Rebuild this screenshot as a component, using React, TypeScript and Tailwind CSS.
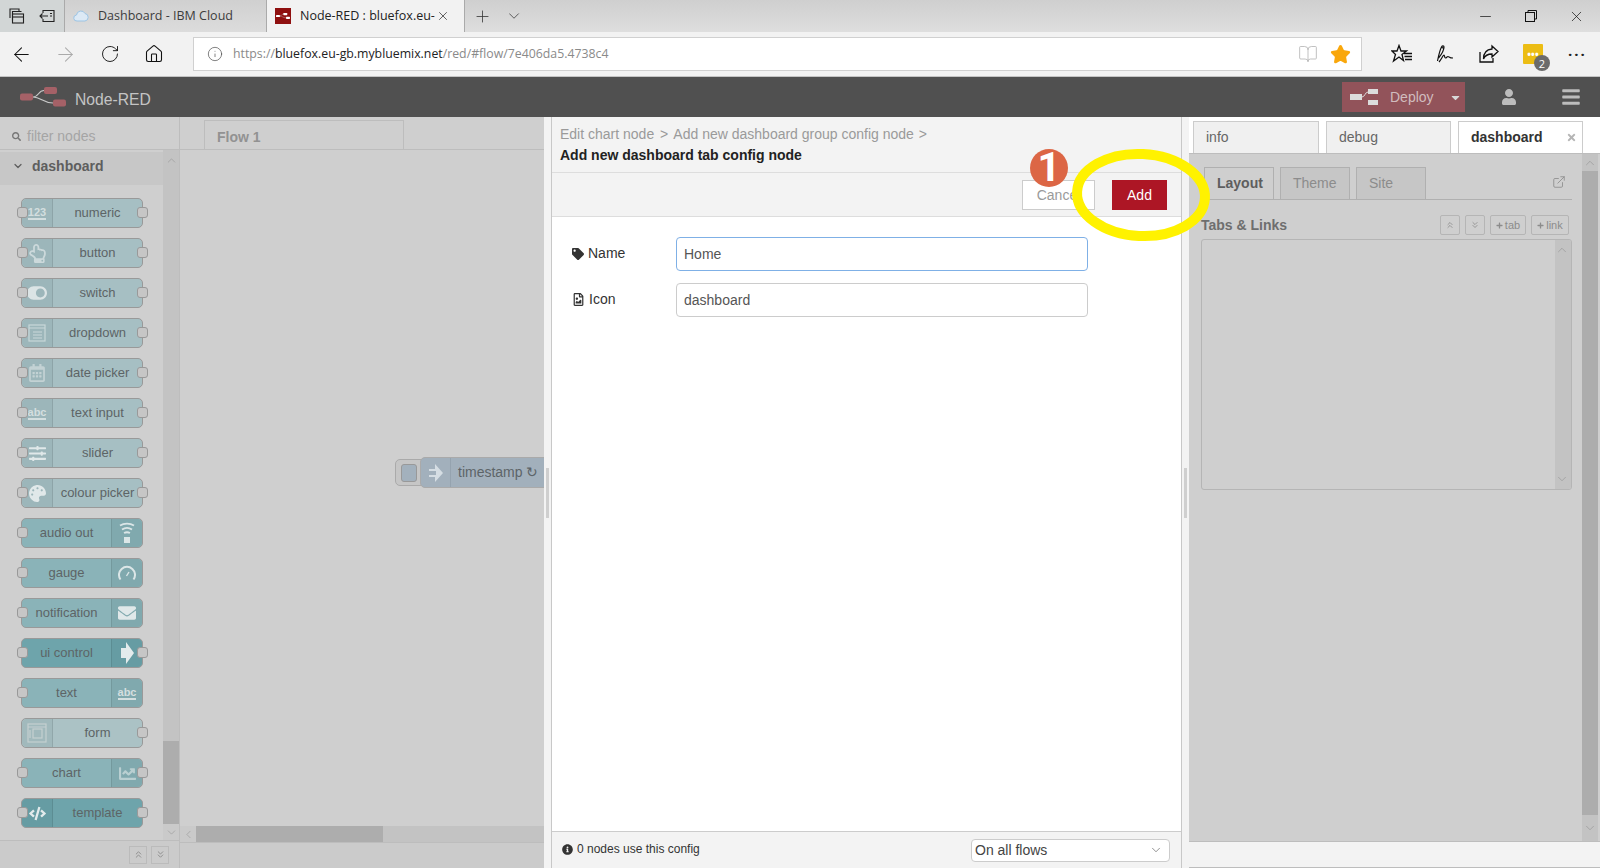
import { ArrowLeft, ArrowRight, BookOpen, ChevronDown, ChevronLeft, ChevronUp, ChevronsDown, ChevronsUp, ExternalLink, Home, Info, Minus, Plus, RotateCw, Star, X } from "lucide-react";
import { FaBars, FaCaretDown, FaCode, FaChartLine, FaEnvelope, FaRegFileImage, FaInfoCircle, FaPalette, FaPlus, FaRegCalendarAlt, FaRegHandPointUp, FaSearch, FaSlidersH, FaTag, FaTimes, FaToggleOn, FaUser } from "react-icons/fa";
import type { ReactNode } from "react";

interface PaletteNode {
  label: string;
  icon: ReactNode;
  side: "left" | "right";
  inPort: boolean;
  outPort: boolean;
  body: string;
  iconBg: string;
}

const Digits = ({ text }: { text: string }) => (
  <span className="border-b-2 border-[#d3dedf] text-[11px] font-bold leading-[12px] text-[#d3dedf]">{text}</span>
);

const WindowIcon = () => (
  <svg width="20" height="20" viewBox="0 0 20 20" fill="none" stroke="#c9d7d9" strokeWidth="1.2">
    <rect x="2" y="2" width="16" height="16" />
    <path d="M2 5h16M6 9h9M6 12h9M6 15h9" />
  </svg>
);

const FormIcon = () => (
  <svg width="20" height="20" viewBox="0 0 20 20" fill="none" stroke="#c5d0d1" strokeWidth="1.2">
    <rect x="1" y="1" width="18" height="18" />
    <rect x="6" y="6" width="9" height="9" />
    <path d="M1 4h18M3 7v8" />
  </svg>
);

const AudioIcon = () => (
  <svg width="16" height="22" viewBox="0 0 16 22" fill="none" stroke="#dbe6e7" strokeWidth="1.8">
    <path d="M1 3.5c4-2.5 10-2.5 14 0M3 7.5c3-2 7-2 10 0M5 11c2-1 4-1 6 0" />
    <rect x="5" y="15" width="6" height="6" fill="#dbe6e7" stroke="none" />
  </svg>
);

const GaugeIcon = () => (
  <svg width="18" height="16" viewBox="0 0 18 16" fill="none" stroke="#dbe6e7" strokeWidth="2">
    <path d="M2.5 14.5a8 8 0 1 1 13 0" />
    <path d="M8.5 11l2.5-4" strokeWidth="1.4" />
  </svg>
);

const ArrowNodeIcon = () => (
  <svg width="14" height="22" viewBox="0 0 14 22" fill="#e3ebec">
    <path d="M1 6h5V0l8 11-8 11v-6H1z" />
  </svg>
);

const nodes: PaletteNode[] = [
  { label: "numeric", icon: <Digits text="123" />, side: "left", inPort: true, outPort: true, body: "bg-[#a6bfc3]", iconBg: "bg-[#9cb6ba]" },
  { label: "button", icon: <FaRegHandPointUp className="text-[#ccd9db] text-[19px]" />, side: "left", inPort: true, outPort: true, body: "bg-[#a6bfc3]", iconBg: "bg-[#9cb6ba]" },
  { label: "switch", icon: <FaToggleOn className="text-[#dbe4e5] text-[20px]" />, side: "left", inPort: true, outPort: true, body: "bg-[#a6bfc3]", iconBg: "bg-[#9cb6ba]" },
  { label: "dropdown", icon: <WindowIcon />, side: "left", inPort: true, outPort: true, body: "bg-[#a6bfc3]", iconBg: "bg-[#9cb6ba]" },
  { label: "date picker", icon: <FaRegCalendarAlt className="text-[#c3d2d4] text-[18px]" />, side: "left", inPort: true, outPort: true, body: "bg-[#a6bfc3]", iconBg: "bg-[#9cb6ba]" },
  { label: "text input", icon: <Digits text="abc" />, side: "left", inPort: true, outPort: true, body: "bg-[#a6bfc3]", iconBg: "bg-[#9cb6ba]" },
  { label: "slider", icon: <FaSlidersH className="text-[#e0e8e9] text-[17px]" />, side: "left", inPort: true, outPort: true, body: "bg-[#a6bfc3]", iconBg: "bg-[#9cb6ba]" },
  { label: "colour picker", icon: <FaPalette className="text-[#e0e8e9] text-[17px]" />, side: "left", inPort: true, outPort: true, body: "bg-[#a6bfc3]", iconBg: "bg-[#9cb6ba]" },
  { label: "audio out", icon: <AudioIcon />, side: "right", inPort: true, outPort: false, body: "bg-[#8ab3b8]", iconBg: "bg-[#80a9ae]" },
  { label: "gauge", icon: <GaugeIcon />, side: "right", inPort: true, outPort: false, body: "bg-[#8ab3b8]", iconBg: "bg-[#80a9ae]" },
  { label: "notification", icon: <FaEnvelope className="text-[#e0e8e9] text-[18px]" />, side: "right", inPort: true, outPort: false, body: "bg-[#8ab3b8]", iconBg: "bg-[#80a9ae]" },
  { label: "ui control", icon: <ArrowNodeIcon />, side: "right", inPort: true, outPort: true, body: "bg-[#6ea4ab]", iconBg: "bg-[#669ca3]" },
  { label: "text", icon: <Digits text="abc" />, side: "right", inPort: true, outPort: false, body: "bg-[#8ab3b8]", iconBg: "bg-[#80a9ae]" },
  { label: "form", icon: <FormIcon />, side: "left", inPort: false, outPort: true, body: "bg-[#abc2c5]", iconBg: "bg-[#a1b9bc]" },
  { label: "chart", icon: <FaChartLine className="text-[#b9cfd1] text-[17px]" />, side: "right", inPort: true, outPort: true, body: "bg-[#8ab3b8]", iconBg: "bg-[#80a9ae]" },
  { label: "template", icon: <FaCode className="text-[#e3ebec] text-[17px]" />, side: "left", inPort: true, outPort: true, body: "bg-[#6ea4ab]", iconBg: "bg-[#669ca3]" },
];

function NodeRedMark({ className, fill }: { className?: string; fill: string }) {
  return (
    <svg className={className} viewBox="0 0 46 20" fill="none">
      <rect x="0" y="6.5" width="13" height="7" rx="2" fill={fill} />
      <rect x="24" y="0" width="13" height="7" rx="2" fill={fill} />
      <rect x="33" y="12.5" width="13" height="7" rx="2" fill={fill} />
      <path d="M13 10c6 0 5-6.5 11-6.5M13 10c8 0 10 6 20 6" stroke="#c9c9c9" strokeWidth="1.2" />
    </svg>
  );
}

function FavoritesIcon() {
  return (
    <svg width="22" height="20" viewBox="0 0 22 20" fill="none" stroke="#111" strokeWidth="1.3">
      <path d="M8 1.5l2 5.5h5.5l-4.500 3.5 1.500 6-4.500-3.500-5.500 4 2-6.500L1 7h5z" />
      <path d="M13 9.500h8M13.500 12.500h7.500M14 15.500h7" />
    </svg>
  );
}

function PenIcon() {
  return (
    <svg width="20" height="20" viewBox="0 0 20 20" fill="none" stroke="#111" strokeWidth="1.2">
      <path d="M1.500 17c1-5 2-10 4-14 .8-1.500 2.500-1.500 2.500 0 0 3-3 8-5.500 11M5 3l3 1.500" />
      <path d="M3 18c2-2 4-7 5-7 .7 0 .3 3 1.500 3 1 0 1.500-1.500 2.500-1.500s1.500 1.500 5 1.500" />
    </svg>
  );
}

function ShareIcon() {
  return (
    <svg width="20" height="20" viewBox="0 0 20 20" fill="none" stroke="#111" strokeWidth="1.3">
      <path d="M1 8v10h13v-4" />
      <path d="M13 2l6 5.500-6 5.500V10C9 10 6 11.500 4.500 15c0-6 3-9.500 8.500-10z" />
    </svg>
  );
}

function BrowserChrome() {
  return (
    <div className="font-['Open_Sans',sans-serif]">
      <div className="flex h-[32px] items-stretch bg-gradient-to-b from-[#cfcfcf] to-[#dedede] text-[12.5px]">
        <div className="flex w-[65px] items-center gap-[14px] border-r border-[#aaa] bg-[#d2d6d6] pl-[9px]">
          <svg width="16" height="16" viewBox="0 0 16 16" fill="none" stroke="#222" strokeWidth="1.1">
            <path d="M1 10V1h9v2M3.500 12.500V3.500H12.500" />
            <rect x="3.500" y="6" width="11" height="9" />
            <path d="M3.500 9h11" />
          </svg>
          <svg width="16" height="14" viewBox="0 0 16 14" fill="none" stroke="#222" strokeWidth="1.1">
            <path d="M4 4V1.500h11v11H4V10M1 7h8M3.500 4.500L1 7l2.500 2.500M11 4.500h2M11 7h2" />
          </svg>
        </div>
        <div className="relative flex w-[201px] items-center bg-gradient-to-b from-[#d0d0d0] to-[#dcdcdc] pl-[33px] text-[#3c3c3c]">
          <svg className="absolute left-[8px] top-[8px]" width="16" height="14" viewBox="0 0 16 14" fill="#dce9f5" stroke="#9cc4e4" strokeWidth="1">
            <path d="M4 13a3 3 0 0 1-.5-6 4.500 4.500 0 0 1 8.500-1.500 3.800 3.800 0 0 1 0 7.500z" />
          </svg>
          <span>Dashboard - IBM Cloud</span>
        </div>
        <div className="flex w-[199px] items-center border-x border-[#aaa] bg-[#f2f2f2] pl-[8px] text-[#222]">
          <span className="flex h-[16px] w-[16px] items-center justify-center bg-[#8f1010]">
            <NodeRedMark className="w-[14px]" fill="#fff" />
          </span>
          <span className="ml-[9px] w-[136px] whitespace-nowrap">Node-RED : bluefox.eu-</span>
          <X size={14} strokeWidth={1.2} />
        </div>
        <div className="flex items-center gap-[13px] pl-[8px] text-[#333]">
          <Plus size={19} strokeWidth={1} />
          <ChevronDown size={18} strokeWidth={1} />
        </div>
        <div className="ml-auto flex items-center gap-[31px] pr-[15px] text-[#111]">
          <Minus size={17} strokeWidth={1} />
          <svg width="12" height="12" viewBox="0 0 12 12" fill="none" stroke="#111" strokeWidth="1">
            <rect x="0.500" y="2.500" width="9" height="9" />
            <path d="M3 2.500V.5h8.500V9H9.500" />
          </svg>
          <X size={17} strokeWidth={1} />
        </div>
      </div>
      <div className="flex h-[45px] items-center border-b border-[#c4c4c4] bg-[#f2f2f2]">
        <ArrowLeft size={23} strokeWidth={1.1} className="ml-[10px] text-[#111]" />
        <ArrowRight size={23} strokeWidth={1.1} className="ml-[21px] text-[#aaa]" />
        <RotateCw size={20} strokeWidth={1.1} className="ml-[23px] text-[#111]" />
        <Home size={20} strokeWidth={1.3} className="ml-[24px] text-[#111]" />
        <div className="ml-[29px] flex h-[34px] w-[1169px] items-center border border-[#d0d0d0] bg-white pl-[13px] text-[12.3px]">
          <Info size={16} strokeWidth={1} className="text-[#444]" />
          <span className="ml-[10px] text-[#8a8a8a]">
            https://<span className="text-[#222]">bluefox.eu-gb.mybluemix.net</span>/red/#flow/7e406da5.4738c4
          </span>
          <BookOpen size={20} strokeWidth={1} className="ml-auto text-[#b5b5b5]" />
          <Star size={21} fill="#f9a70c" stroke="#f9a70c" className="ml-[12px] mr-[10px]" />
        </div>
        <div className="ml-[29px]"><FavoritesIcon /></div>
        <div className="ml-[23px]"><PenIcon /></div>
        <div className="ml-[23px]"><ShareIcon /></div>
        <div className="relative ml-[24px] flex h-[20px] w-[20px] items-center justify-center rounded-[1px] bg-[#ecbd14] text-[10px] font-bold leading-none text-white">
          •••
          <span className="absolute -bottom-[7px] -right-[7px] flex h-[16px] w-[16px] items-center justify-center rounded-full bg-[#6b6b6b] text-[11px] font-normal">2</span>
        </div>
        <div className="ml-[25px] text-[15px] font-bold tracking-[2px] text-[#222]">···</div>
      </div>
    </div>
  );
}

function Header() {
  return (
    <div className="flex h-[40px] items-center bg-[#505050] font-['Liberation_Sans',sans-serif]">
      <NodeRedMark className="ml-[20px] h-[20px] w-[46px]" fill="#a56167" />
      <span className="ml-[9px] mt-[5px] text-[15.7px] text-[#c4c4c4]">Node-RED</span>
      <div className="ml-auto flex h-[30px] w-[123px] items-center bg-[#92535a] pl-[8px] text-[14px] text-[#d1bcbe]">
        <svg width="28" height="16" viewBox="0 0 28 16" fill="#dcdcdc">
          <rect x="0" y="5" width="12" height="6" />
          <rect x="18" y="0" width="10" height="5" />
          <rect x="18" y="11" width="10" height="5" />
          <path d="M12 8c3 0 3-5 6-5" stroke="#dcdcdc" fill="none" />
        </svg>
        <span className="ml-[12px]">Deploy</span>
        <FaCaretDown className="ml-[15px] text-[#d8d8d8]" size={13} />
      </div>
      <FaUser size={16} className="ml-[36px] text-[#bcbcbc]" />
      <FaBars size={20} className="ml-[44px] mr-[19px] text-[#bcbcbc]" />
    </div>
  );
}

function NodeBox({ node }: { node: PaletteNode }) {
  const icon = (
    <div className={`flex w-[31px] shrink-0 items-center justify-center ${node.iconBg} ${node.side === "left" ? "rounded-l-[5px] border-r" : "rounded-r-[5px] border-l"} border-[#00000018]`}>
      {node.icon}
    </div>
  );
  return (
    <div className={`relative ml-[21px] flex h-[30px] w-[122px] shrink-0 rounded-[5px] border border-[#999] ${node.body}`}>
      {node.side === "left" && icon}
      <div className="flex flex-1 items-center justify-center whitespace-nowrap text-[13px] text-[#5d6466]">{node.label}</div>
      {node.side === "right" && icon}
      {node.inPort && <span className="absolute -left-[5px] top-[8px] h-[11px] w-[11px] rounded-[3px] border border-[#999] bg-[#c6c6c6]" />}
      {node.outPort && <span className="absolute -right-[6px] top-[8px] h-[11px] w-[11px] rounded-[3px] border border-[#999] bg-[#c6c6c6]" />}
    </div>
  );
}

function Palette() {
  return (
    <div className="flex w-[180px] shrink-0 flex-col border-r border-[#bdbdbd] bg-[#cfcfcf]">
      <div className="flex h-[33px] items-center gap-[6px] border-b border-[#bdbdbd] pl-[12px] pt-[6px] text-[14px] text-[#a5a5a5]">
        <FaSearch size={9} className="text-[#777]" />
        filter nodes
      </div>
      <div className="flex h-[691px] border-b border-[#bdbdbd]">
        <div className="flex w-[163px] flex-col">
          <div className="mt-[2px] flex h-[33px] items-center bg-[#c7c7c7] pb-[5px] pl-[12px] text-[14px] font-bold text-[#5e5e5e]">
            <ChevronDown size={12} strokeWidth={2.5} />
            <span className="ml-[8px]">dashboard</span>
          </div>
          <div className="flex flex-col gap-[10px] pt-[13px]">
            {nodes.map((node) => (
              <NodeBox key={node.label} node={node} />
            ))}
          </div>
        </div>
        <div className="flex w-[16px] flex-col bg-[#c3c3c3]">
          <div className="flex h-[16px] items-center justify-center pt-[4px]"><ChevronUp size={13} strokeWidth={1} className="text-[#8f8f8f]" /></div>
          <div className="mt-auto h-[83px] bg-[#adadad]" />
          <div className="flex h-[16px] items-center justify-center bg-[#cacaca]"><ChevronDown size={13} strokeWidth={1} className="text-[#8f8f8f]" /></div>
        </div>
      </div>
      <div className="flex flex-1 items-center justify-end gap-[4px] bg-[#cbcbcb] pr-[10px]">
        <span className="flex h-[18px] w-[18px] items-center justify-center border border-[#bbb]"><ChevronsUp size={11} className="text-[#8a8a8a]" /></span>
        <span className="flex h-[18px] w-[18px] items-center justify-center border border-[#bbb]"><ChevronsDown size={11} className="text-[#8a8a8a]" /></span>
      </div>
    </div>
  );
}

function Canvas() {
  return (
    <div className="relative flex w-[364px] shrink-0 flex-col bg-[#cfcfcf]">
      <div className="flex h-[33px] items-end border-b border-[#bdbdbd] pl-[24px]">
        <div className="flex h-[29px] w-[200px] items-center border-x border-t border-[#bdbdbd] pl-[12px] pt-[4px] text-[14px] font-bold text-[#929292]">Flow 1</div>
      </div>
      <div className="relative flex-1 overflow-hidden">
        {/* inject node, cut off by the edit tray */}
        <div className="absolute left-[215px] top-[309px] flex h-[27px] w-[35px] items-center rounded-l-[5px] border border-[#aaa] bg-[#c6c6c6] pl-[5px]">
          <span className="h-[18px] w-[16px] rounded-[3px] border border-[#999] bg-[#a3b1bd]" />
        </div>
        <div className="absolute left-[240px] top-[307px] flex h-[31px] w-[130px] items-center rounded-l-[5px] border border-[#aaa] bg-[#a2b0bc] text-[14px] text-[#5d6468]">
          <div className="flex h-full w-[30px] items-center justify-center border-r border-[#95a3af]">
            <svg width="14" height="20" viewBox="0 0 14 20" fill="#d5dde3"><path d="M0 6h6V1l8 9-8 9v-5H0v-2h7V8H0z" /></svg>
          </div>
          <span className="ml-[7px] whitespace-nowrap">timestamp ↻</span>
        </div>
      </div>
      <div className="flex h-[16px] bg-[#c3c3c3]">
        <div className="flex w-[16px] items-center justify-center bg-[#cacaca]"><ChevronLeft size={13} strokeWidth={1} className="text-[#8f8f8f]" /></div>
        <div className="w-[187px] bg-[#adadad]" />
      </div>
      <div className="h-[26px] border-t border-[#bdbdbd] bg-[#cbcbcb]" />
    </div>
  );
}

function Divider() {
  return (
    <div className="flex w-[7px] shrink-0 items-center justify-center bg-[#f3f3f3]">
      <span className="h-[50px] w-[3px] bg-[#cfcfcf]" />
    </div>
  );
}

function FormRow({ icon, label, value, focused }: { icon: ReactNode; label: string; value: string; focused?: boolean }) {
  return (
    <div className="flex items-center pl-[20px]">
      <div className="-mt-[1px] flex w-[104px] items-center gap-[4px] text-[14px] text-[#333]">
        {icon}
        {label}
      </div>
      <div className={`flex h-[34px] w-[412px] items-center rounded-[4px] border bg-white pl-[7px] text-[14px] text-[#555] ${focused ? "border-[#7fb0e6]" : "border-[#ccc]"}`}>
        {value}
      </div>
    </div>
  );
}

function EditTray() {
  return (
    <div className="flex w-[631px] shrink-0 flex-col border-x border-[#c8c8c8] bg-white">
      <div className="flex h-[56px] flex-col justify-center border-b border-[#ddd] bg-[#f3f3f3] pl-[8px] text-[14px]">
        <div className="text-[#9a9a9a]">
          Edit chart node <span className="mx-[2px]">&gt;</span> Add new dashboard group config node <span className="mx-[1px]">&gt;</span>
        </div>
        <div className="font-bold text-[#222]">Add new dashboard tab config node</div>
      </div>
      <div className="flex h-[44px] items-center border-b border-[#ddd] bg-[#f3f3f3] pl-[470px] pt-[1px]">
        <div className="flex h-[30px] w-[73px] items-center justify-center border border-[#ccc] bg-white text-[14px] text-[#9a9a9a]">Cancel</div>
        <div className="ml-[17px] flex h-[30px] w-[55px] items-center justify-center bg-[#ad1625] text-[14px] text-white">Add</div>
      </div>
      <div className="flex flex-1 flex-col gap-[12px] pt-[20px]">
        <FormRow icon={<FaTag size={12} />} label="Name" value="Home" focused />
        <FormRow icon={<FaRegFileImage size={13} />} label="Icon" value="dashboard" />
      </div>
      <div className="flex h-[37px] items-center border-t border-[#ccc] bg-[#f3f3f3] pl-[10px] text-[12px] text-[#333]">
        <FaInfoCircle size={11} className="-mt-[2px]" />
        <span className="-mt-[2px] ml-[4px]">0 nodes use this config</span>
        <div className="ml-auto mr-[11px] flex h-[23px] w-[199px] items-center justify-between rounded-[4px] border border-[#ccc] bg-white pl-[3px] pr-[6px] text-[14px] text-[#444]">
          On all flows
          <ChevronDown size={14} strokeWidth={1} />
        </div>
      </div>
    </div>
  );
}

function SmallButton({ children, width }: { children: ReactNode; width: string }) {
  return (
    <span className={`flex h-[20px] items-center justify-center gap-[2px] rounded-[2px] border border-[#b5b5b5] text-[11px] text-[#8c8c8c] ${width}`}>
      {children}
    </span>
  );
}

function Sidebar() {
  return (
    <div className="flex flex-1 flex-col bg-white">
      <div className="flex h-[36px] items-end gap-[7px] pl-[4px] text-[14px]">
        <div className="flex h-[32px] w-[126px] items-center border-x border-t border-[#ccc] bg-[#f0f0f0] pl-[12px] text-[#666]">info</div>
        <div className="flex h-[32px] w-[125px] items-center border-x border-t border-[#ccc] bg-[#f0f0f0] pl-[12px] text-[#666]">debug</div>
        <div className="flex h-[32px] w-[125px] items-center justify-between border-x border-t border-[#ccc] bg-white pl-[12px] pr-[5px] font-bold text-[#333]">
          dashboard
          <FaTimes size={11} className="text-[#b5b5b5]" />
        </div>
      </div>
      <div className="flex h-[689px] border-y border-[#bdbdbd] bg-[#cfcfcf]">
        <div className="flex flex-1 flex-col pl-[12px] pr-[10px]">
          <div className="mt-[14px] flex h-[32px] items-end gap-[6px] border-b border-[#b0b0b0] pl-[3px] text-[14px]">
            <div className="flex h-[32px] w-[70px] items-center border-x border-t border-[#b0b0b0] pl-[12px] font-bold text-[#5e5e5e]">Layout</div>
            <div className="flex h-[32px] w-[70px] items-center border-x border-t border-[#b0b0b0] bg-[#c6c6c6] pl-[12px] text-[#8c8c8c]">Theme</div>
            <div className="flex h-[32px] w-[70px] items-center border-x border-t border-[#b0b0b0] bg-[#c6c6c6] pl-[12px] text-[#8c8c8c]">Site</div>
            <ExternalLink size={14} strokeWidth={1.5} className="mb-[10px] ml-auto mr-[6px] text-[#8f8f8f]" />
          </div>
          <div className="mt-[14px] flex h-[22px] items-center text-[14px] font-bold text-[#6e6e6e]">
            Tabs &amp; Links
            <div className="ml-auto mr-[3px] flex gap-[5px] font-normal">
              <SmallButton width="w-[20px]"><ChevronsUp size={10} /></SmallButton>
              <SmallButton width="w-[20px]"><ChevronsDown size={10} /></SmallButton>
              <SmallButton width="w-[36px]"><FaPlus size={7} />tab</SmallButton>
              <SmallButton width="w-[38px]"><FaPlus size={7} />link</SmallButton>
            </div>
          </div>
          <div className="mt-[3px] flex h-[251px] justify-end overflow-hidden rounded-[3px] border border-[#b5b5b5]">
            <div className="flex w-[16px] flex-col justify-between bg-[#c3c3c3] py-[3px]">
              <ChevronUp size={14} strokeWidth={1} className="text-[#8f8f8f]" />
              <ChevronDown size={14} strokeWidth={1} className="text-[#8f8f8f]" />
            </div>
          </div>
        </div>
        <div className="mr-[2px] flex w-[16px] flex-col">
          <div className="flex h-[17px] items-center justify-center bg-[#c3c3c3]"><ChevronUp size={14} strokeWidth={1} className="text-[#8f8f8f]" /></div>
          <div className="flex-1 bg-[#adadad]" />
          <div className="flex h-[26px] items-center justify-center bg-[#c3c3c3]"><ChevronDown size={14} strokeWidth={1} className="text-[#8f8f8f]" /></div>
        </div>
      </div>
      <div className="flex-1 border-b border-[#bdbdbd] bg-[#f3f3f3]" />
    </div>
  );
}

export default function App() {
  return (
    <div className="relative flex h-[868px] w-[1600px] flex-col overflow-hidden bg-white font-['Liberation_Sans',Arial,sans-serif]">
      <BrowserChrome />
      <Header />
      <div className="flex h-[751px]">
        <Palette />
        <Canvas />
        <Divider />
        <EditTray />
        <Divider />
        <Sidebar />
      </div>

      {/* annotations drawn over the screenshot */}
      <div className="absolute left-[1030px] top-[149px] flex h-[38px] w-[38px] items-center justify-center rounded-full bg-[#dc6645] font-['Roboto',sans-serif] text-[40px] font-bold leading-none text-white">1</div>
      <svg className="absolute left-[1068px] top-[145px]" width="146" height="100" viewBox="0 0 146 100" fill="none">
        <ellipse cx="73" cy="50" rx="64" ry="41" stroke="#fff200" strokeWidth="10" transform="rotate(3 73 50)" />
      </svg>
    </div>
  );
}
